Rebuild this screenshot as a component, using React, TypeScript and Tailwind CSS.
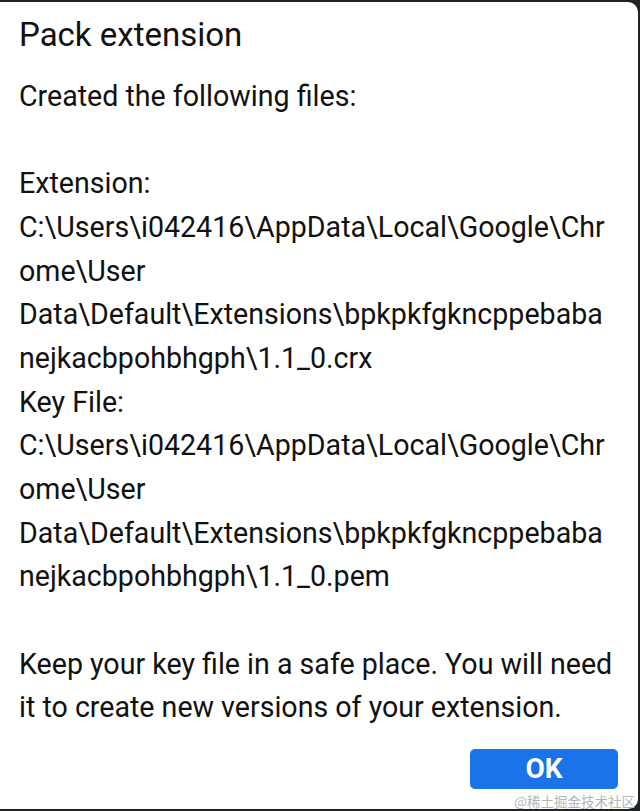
import React from 'react';

const extensionLines = [
  'C:\\Users\\i042416\\AppData\\Local\\Google\\Chr',
  'ome\\User',
  'Data\\Default\\Extensions\\bpkpkfgkncppebaba',
  'nejkacbpohbhgph\\1.1_0.crx',
];

const keyLines = [
  'C:\\Users\\i042416\\AppData\\Local\\Google\\Chr',
  'ome\\User',
  'Data\\Default\\Extensions\\bpkpkfgkncppebaba',
  'nejkacbpohbhgph\\1.1_0.pem',
];

export default function App() {
  return (
    <div
      className="h-[811px] w-[640px] overflow-hidden bg-[#202124]"
      style={{ fontFamily: 'Roboto, "Noto Sans", sans-serif' }}
    >
      <div className="flex h-full flex-col rounded-r-[12px] border-y-2 border-r-2 border-[#202124] bg-white">
        {/* Title */}
        <h1 className="pl-[19px] pt-[13px] text-[33px] leading-[40px] text-[#111111]">
          Pack extension
        </h1>

        {/* Body */}
        <div className="pl-[19px] pt-[20px] text-[28.6px] leading-[43.67px] text-[#111111]">
          <p>Created the following files:</p>
          <p>&nbsp;</p>
          <p>Extension:</p>
          {extensionLines.map((line, i) => (
            <p key={`e${i}`}>{line}</p>
          ))}
          <p>Key File:</p>
          {keyLines.map((line, i) => (
            <p key={`k${i}`}>{line}</p>
          ))}
          <p>&nbsp;</p>
          <p>Keep your key file in a safe place. You will need</p>
          <p>it to create new versions of your extension.</p>
        </div>

        {/* Footer */}
        <div className="relative flex flex-1 items-start justify-end pr-[20px] pt-[19px]">
          <button className="flex h-[40px] w-[148px] items-center justify-center rounded-[5px] bg-[#1a73e8] text-[28px] font-bold text-white">
            OK
          </button>
          <span
            className="absolute bottom-[1px] right-[3px] text-[13.5px] leading-none text-[#b4b4b4]"
            style={{ fontFamily: '"Noto Sans CJK SC", "Noto Sans", sans-serif' }}
          >
            @稀土掘金技术社区
          </span>
        </div>
      </div>
    </div>
  );
}
